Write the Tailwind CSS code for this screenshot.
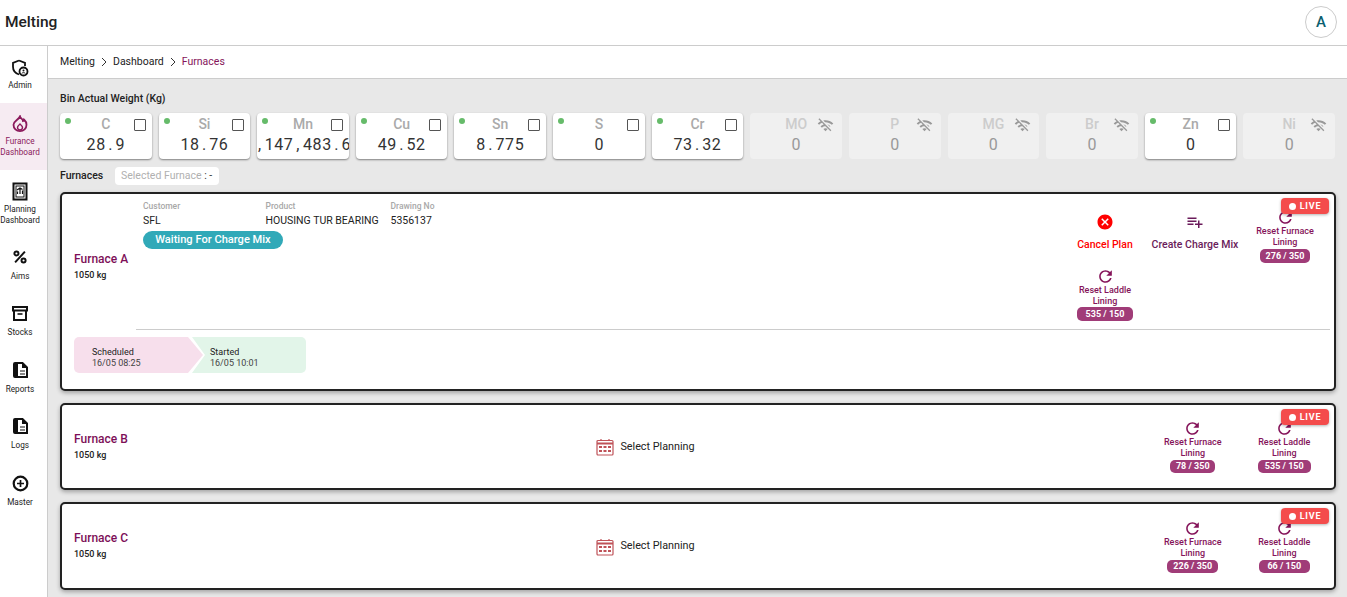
<!DOCTYPE html>
<html lang="en">
<head>
    <meta charset="UTF-8">
    <meta name="viewport" content="width=device-width, initial-scale=1.0">
    <title>Melting | Furnaces</title>
    <script src="https://cdn.jsdelivr.net/npm/@tailwindcss/browser@4"></script>
</head>
<body class="h-screen overflow-hidden bg-white font-[Roboto,sans-serif] text-[#222]">
    <!-- Top bar -->
    <header class="h-[46px] flex items-center justify-between pl-[5px] pr-[10px] border-b border-[#ccc]">
        <h1 class="text-[15.5px] font-medium">Melting</h1>
        <div class="w-8 h-8 -mt-[1px] rounded-full border border-[#ccc] flex items-center justify-center text-[15px] font-medium text-[#0b5f70]">A</div>
    </header>

    <div class="flex h-[551px]">
        <!-- Sidebar -->
        <nav class="w-[48px] shrink-0 border-r border-[#ccc] text-[8.2px] leading-[11px] text-center">
            <a class="h-[57px] pr-[7px] flex flex-col items-center justify-center gap-[3px]">
                <svg class="w-[18px] h-[18px]" viewBox="0 0 18 18" fill="none" stroke="#111" stroke-width="1.8"><path d="M8 1.500l6 2.300v3.200M8 1.500L2 3.800v4c0 3.600 2.500 6.600 6 7.700"/><circle cx="12.500" cy="12.500" r="4" fill="#fff"/><circle cx="12.500" cy="11.500" r="1" fill="#111" stroke="none"/><path d="M10.700 14.400c1-1 2.600-1 3.600 0" stroke-width="1"/></svg>
                <span>Admin</span>
            </a>
            <a class="h-[67px] pr-[7px] flex flex-col items-center justify-center gap-[3px] bg-[#f6ebf2] text-[#8b1a5c]">
                <svg class="w-[16px] h-[18px]" viewBox="0 0 16 18" fill="none" stroke="#8b1a5c" stroke-width="1.8"><path d="M8 1.500c.4 2 3 2.500 3 4.500 1-.3 1.200-1 1.200-1.300 1.500 1.300 2.300 3 2.300 5 0 3.800-2.900 6.500-6.500 6.500s-6.500-2.700-6.500-6.500c0-3.500 4.800-4.500 6.500-8.200z"/><path d="M8 9c1.400 1.200 2.500 2.200 2.500 3.600 0 1.300-1.100 2.400-2.500 2.400s-2.500-1.100-2.500-2.400C5.500 11.200 6.600 10.200 8 9z" stroke-width="1.400"/></svg>
                <span>Furance<br>Dashboard</span>
            </a>
            <a class="h-[67px] pr-[7px] flex flex-col items-center justify-center gap-[3px]">
                <svg class="w-[16px] h-[19px]" viewBox="0 0 16 19" fill="none" stroke="#111"><rect x="1.500" y="1.500" width="13" height="16" stroke-width="2"/><rect x="4" y="4" width="8" height="11" stroke-width="1"/><path d="M5.500 12V9.500M8 12V6.500M10.500 12V8.500M5 8l3-2 2.500 1.500" stroke-width="1.200"/></svg>
                <span>Planning<br>Dashboard</span>
            </a>
            <a class="h-[56px] pr-[7px] flex flex-col items-center justify-center gap-[6px]">
                <svg class="w-[16px] h-[16px]" viewBox="0 0 18 18" fill="none" stroke="#111" stroke-width="2.200"><path d="M14.500 3L3.500 15"/><circle cx="5" cy="5" r="2.300"/><circle cx="13" cy="13" r="2.300"/></svg>
                <span>Aims</span>
            </a>
            <a class="h-[57px] pr-[7px] flex flex-col items-center justify-center gap-[6px]">
                <svg class="w-[16px] h-[16px]" viewBox="0 0 16 16" fill="none" stroke="#111" stroke-width="2"><path d="M1 2h14v3.500H1zM2 5.500V15h12V5.500"/><path d="M5.500 9h5" stroke-width="1.600"/></svg>
                <span>Stocks</span>
            </a>
            <a class="h-[56px] pr-[7px] flex flex-col items-center justify-center gap-[6px]">
                <svg class="w-[15px] h-[16px]" viewBox="0 0 15 16"><path d="M2 1h7.500L14 5.500V15H2a1 1 0 0 1-1-1V2a1 1 0 0 1 1-1z" fill="none" stroke="#111" stroke-width="2"/><path d="M1 1h4v14H1zM9 1v5h5z" fill="#111"/><path d="M7 9h5M7 12h5" stroke="#111" stroke-width="1"/></svg>
                <span>Reports</span>
            </a>
            <a class="h-[57px] pr-[7px] flex flex-col items-center justify-center gap-[6px]">
                <svg class="w-[15px] h-[16px]" viewBox="0 0 15 16"><path d="M2 1h7.500L14 5.500V15H2a1 1 0 0 1-1-1V2a1 1 0 0 1 1-1z" fill="none" stroke="#111" stroke-width="2"/><path d="M1 1h4v14H1zM9 1v5h5z" fill="#111"/><path d="M7 9h5M7 12h5" stroke="#111" stroke-width="1"/></svg>
                <span>Logs</span>
            </a>
            <a class="h-[57px] pr-[7px] flex flex-col items-center justify-center gap-[5px]">
                <svg class="w-[17px] h-[17px]" viewBox="0 0 17 17" fill="none" stroke="#111" stroke-width="2.200"><circle cx="8.500" cy="8.500" r="6.800"/><path d="M8.500 5v7M5 8.500h7" stroke-width="1.700"/></svg>
                <span>Master</span>
            </a>
        </nav>

        <div class="flex-1 min-w-0 flex flex-col bg-[#e8e8e8]">
            <!-- Breadcrumb -->
            <div class="h-[33px] shrink-0 bg-white border-b border-[#ccc] pl-[12px] flex items-center gap-[5px] text-[10.5px] text-[#222]">
                <span>Melting</span>
                <svg class="w-[8px] h-[10px]" viewBox="0 0 8 10" fill="none" stroke="#333"><path d="M2 1l4 4-4 4"/></svg>
                <span>Dashboard</span>
                <svg class="w-[8px] h-[10px]" viewBox="0 0 8 10" fill="none" stroke="#333"><path d="M2 1l4 4-4 4"/></svg>
                <span class="text-[#85145a]">Furnaces</span>
            </div>

            <main class="pl-[12px] pr-[11px] pt-[13px]">
                <h2 class="text-[10.5px] font-medium leading-[13px]">Bin Actual Weight (Kg)</h2>

                <!-- Bins -->
                <div class="grid grid-cols-13 gap-[7px] mt-[8px] mr-[1px]">
                    <div class="relative h-[46px] bg-white rounded-[4px] shadow-[0_1px_2px_rgba(0,0,0,0.45)] overflow-hidden">
                        <span class="absolute left-[5px] top-[5px] w-[6px] h-[6px] rounded-full bg-[#66bb6a]"></span>
                        <span class="absolute right-[6px] top-[6px] w-[12px] h-[12px] border border-[#555] rounded-[1px]"></span>
                        <div class="pt-[3px] text-center text-[14px] leading-[16px] font-medium text-[#aaa]">C</div>
                        <div class="mt-[4px] flex justify-center whitespace-nowrap text-[16px] leading-[18px] tracking-[0.6px] text-[#333]"><span>28<span class="inline-block w-[9.6px] text-center">.</span>9</span></div>
                    </div>
                    <div class="relative h-[46px] bg-white rounded-[4px] shadow-[0_1px_2px_rgba(0,0,0,0.45)] overflow-hidden">
                        <span class="absolute left-[5px] top-[5px] w-[6px] h-[6px] rounded-full bg-[#66bb6a]"></span>
                        <span class="absolute right-[6px] top-[6px] w-[12px] h-[12px] border border-[#555] rounded-[1px]"></span>
                        <div class="pt-[3px] text-center text-[14px] leading-[16px] font-medium text-[#aaa]">Si</div>
                        <div class="mt-[4px] flex justify-center whitespace-nowrap text-[16px] leading-[18px] tracking-[0.6px] text-[#333]"><span>18<span class="inline-block w-[9.6px] text-center">.</span>76</span></div>
                    </div>
                    <div class="relative h-[46px] bg-white rounded-[4px] shadow-[0_1px_2px_rgba(0,0,0,0.45)] overflow-hidden">
                        <span class="absolute left-[5px] top-[5px] w-[6px] h-[6px] rounded-full bg-[#66bb6a]"></span>
                        <span class="absolute right-[6px] top-[6px] w-[12px] h-[12px] border border-[#555] rounded-[1px]"></span>
                        <div class="pt-[3px] text-center text-[14px] leading-[16px] font-medium text-[#aaa]">Mn</div>
                        <div class="mt-[4px] flex justify-center whitespace-nowrap text-[16px] leading-[18px] tracking-[0.6px] text-[#333]"><span class="shrink-0">2<span class="inline-block w-[9.6px] text-center">,</span>147<span class="inline-block w-[9.6px] text-center">,</span>483<span class="inline-block w-[9.6px] text-center">.</span>64</span></div>
                    </div>
                    <div class="relative h-[46px] bg-white rounded-[4px] shadow-[0_1px_2px_rgba(0,0,0,0.45)] overflow-hidden">
                        <span class="absolute left-[5px] top-[5px] w-[6px] h-[6px] rounded-full bg-[#66bb6a]"></span>
                        <span class="absolute right-[6px] top-[6px] w-[12px] h-[12px] border border-[#555] rounded-[1px]"></span>
                        <div class="pt-[3px] text-center text-[14px] leading-[16px] font-medium text-[#aaa]">Cu</div>
                        <div class="mt-[4px] flex justify-center whitespace-nowrap text-[16px] leading-[18px] tracking-[0.6px] text-[#333]"><span>49<span class="inline-block w-[9.6px] text-center">.</span>52</span></div>
                    </div>
                    <div class="relative h-[46px] bg-white rounded-[4px] shadow-[0_1px_2px_rgba(0,0,0,0.45)] overflow-hidden">
                        <span class="absolute left-[5px] top-[5px] w-[6px] h-[6px] rounded-full bg-[#66bb6a]"></span>
                        <span class="absolute right-[6px] top-[6px] w-[12px] h-[12px] border border-[#555] rounded-[1px]"></span>
                        <div class="pt-[3px] text-center text-[14px] leading-[16px] font-medium text-[#aaa]">Sn</div>
                        <div class="mt-[4px] flex justify-center whitespace-nowrap text-[16px] leading-[18px] tracking-[0.6px] text-[#333]"><span>8<span class="inline-block w-[9.6px] text-center">.</span>775</span></div>
                    </div>
                    <div class="relative h-[46px] bg-white rounded-[4px] shadow-[0_1px_2px_rgba(0,0,0,0.45)] overflow-hidden">
                        <span class="absolute left-[5px] top-[5px] w-[6px] h-[6px] rounded-full bg-[#66bb6a]"></span>
                        <span class="absolute right-[6px] top-[6px] w-[12px] h-[12px] border border-[#555] rounded-[1px]"></span>
                        <div class="pt-[3px] text-center text-[14px] leading-[16px] font-medium text-[#aaa]">S</div>
                        <div class="mt-[4px] text-center text-[16px] leading-[18px] text-[#333]">0</div>
                    </div>
                    <div class="relative h-[46px] bg-white rounded-[4px] shadow-[0_1px_2px_rgba(0,0,0,0.45)] overflow-hidden">
                        <span class="absolute left-[5px] top-[5px] w-[6px] h-[6px] rounded-full bg-[#66bb6a]"></span>
                        <span class="absolute right-[6px] top-[6px] w-[12px] h-[12px] border border-[#555] rounded-[1px]"></span>
                        <div class="pt-[3px] text-center text-[14px] leading-[16px] font-medium text-[#aaa]">Cr</div>
                        <div class="mt-[4px] flex justify-center whitespace-nowrap text-[16px] leading-[18px] tracking-[0.6px] text-[#333]"><span>73<span class="inline-block w-[9.6px] text-center">.</span>32</span></div>
                    </div>
                    <div class="relative h-[46px] bg-[#f0f0f0] rounded-[4px]">
                        <svg class="absolute right-[8px] top-[4px] w-[17px] h-[17px]" viewBox="0 0 24 24" fill="#999"><path d="M22.99 9C19.15 5.16 13.8 3.76 8.84 4.78l2.52 2.52c3.47-.17 6.99 1.05 9.63 3.7l2-2zm-4 4c-1.29-1.29-2.84-2.2-4.49-2.73l3.53 3.53.96-.8zM2 3.05L5.07 6.1C3.6 6.82 2.22 7.78 1 9l1.99 2c1.24-1.24 2.67-2.16 4.2-2.77l2.24 2.24C7.81 10.89 6.27 11.73 5 13v.01L6.99 15c1.36-1.36 3.14-2.04 4.92-2.06L18.98 20l1.27-1.26L3.29 1.79 2 3.05zM9 17l3 3 3-3c-1.65-1.66-4.34-1.66-6 0z"/></svg>
                        <div class="pt-[3px] text-center text-[14px] leading-[16px] font-medium text-[#ccc]">MO</div>
                        <div class="mt-[4px] text-center text-[16px] leading-[18px] text-[#999]">0</div>
                    </div>
                    <div class="relative h-[46px] bg-[#f0f0f0] rounded-[4px]">
                        <svg class="absolute right-[8px] top-[4px] w-[17px] h-[17px]" viewBox="0 0 24 24" fill="#999"><path d="M22.99 9C19.15 5.16 13.8 3.76 8.84 4.78l2.52 2.52c3.47-.17 6.99 1.05 9.63 3.7l2-2zm-4 4c-1.29-1.29-2.84-2.2-4.49-2.73l3.53 3.53.96-.8zM2 3.05L5.07 6.1C3.6 6.82 2.22 7.78 1 9l1.99 2c1.24-1.24 2.67-2.16 4.2-2.77l2.24 2.24C7.81 10.89 6.27 11.73 5 13v.01L6.99 15c1.36-1.36 3.14-2.04 4.92-2.06L18.98 20l1.27-1.26L3.29 1.79 2 3.05zM9 17l3 3 3-3c-1.65-1.66-4.34-1.66-6 0z"/></svg>
                        <div class="pt-[3px] text-center text-[14px] leading-[16px] font-medium text-[#ccc]">P</div>
                        <div class="mt-[4px] text-center text-[16px] leading-[18px] text-[#999]">0</div>
                    </div>
                    <div class="relative h-[46px] bg-[#f0f0f0] rounded-[4px]">
                        <svg class="absolute right-[8px] top-[4px] w-[17px] h-[17px]" viewBox="0 0 24 24" fill="#999"><path d="M22.99 9C19.15 5.16 13.8 3.76 8.84 4.78l2.52 2.52c3.47-.17 6.99 1.05 9.63 3.7l2-2zm-4 4c-1.29-1.29-2.84-2.2-4.49-2.73l3.53 3.53.96-.8zM2 3.05L5.07 6.1C3.6 6.82 2.22 7.78 1 9l1.99 2c1.24-1.24 2.67-2.16 4.2-2.77l2.24 2.24C7.81 10.89 6.27 11.73 5 13v.01L6.99 15c1.36-1.36 3.14-2.04 4.92-2.06L18.98 20l1.27-1.26L3.29 1.79 2 3.05zM9 17l3 3 3-3c-1.65-1.66-4.34-1.66-6 0z"/></svg>
                        <div class="pt-[3px] text-center text-[14px] leading-[16px] font-medium text-[#ccc]">MG</div>
                        <div class="mt-[4px] text-center text-[16px] leading-[18px] text-[#999]">0</div>
                    </div>
                    <div class="relative h-[46px] bg-[#f0f0f0] rounded-[4px]">
                        <svg class="absolute right-[8px] top-[4px] w-[17px] h-[17px]" viewBox="0 0 24 24" fill="#999"><path d="M22.99 9C19.15 5.16 13.8 3.76 8.84 4.78l2.52 2.52c3.47-.17 6.99 1.05 9.63 3.7l2-2zm-4 4c-1.29-1.29-2.84-2.2-4.49-2.73l3.53 3.53.96-.8zM2 3.05L5.07 6.1C3.6 6.82 2.22 7.78 1 9l1.99 2c1.24-1.24 2.67-2.16 4.2-2.77l2.24 2.24C7.81 10.89 6.27 11.73 5 13v.01L6.99 15c1.36-1.36 3.14-2.04 4.92-2.06L18.98 20l1.27-1.26L3.29 1.79 2 3.05zM9 17l3 3 3-3c-1.65-1.66-4.34-1.66-6 0z"/></svg>
                        <div class="pt-[3px] text-center text-[14px] leading-[16px] font-medium text-[#ccc]">Br</div>
                        <div class="mt-[4px] text-center text-[16px] leading-[18px] text-[#999]">0</div>
                    </div>
                    <div class="relative h-[46px] bg-white rounded-[4px] shadow-[0_1px_2px_rgba(0,0,0,0.45)] overflow-hidden">
                        <span class="absolute left-[5px] top-[5px] w-[6px] h-[6px] rounded-full bg-[#66bb6a]"></span>
                        <span class="absolute right-[6px] top-[6px] w-[12px] h-[12px] border border-[#555] rounded-[1px]"></span>
                        <div class="pt-[3px] text-center text-[14px] leading-[16px] font-medium text-[#aaa]">Zn</div>
                        <div class="mt-[4px] text-center text-[16px] leading-[18px] text-[#333]">0</div>
                    </div>
                    <div class="relative h-[46px] bg-[#f0f0f0] rounded-[4px]">
                        <svg class="absolute right-[8px] top-[4px] w-[17px] h-[17px]" viewBox="0 0 24 24" fill="#999"><path d="M22.99 9C19.15 5.16 13.8 3.76 8.84 4.78l2.52 2.52c3.47-.17 6.99 1.05 9.63 3.7l2-2zm-4 4c-1.29-1.29-2.84-2.2-4.49-2.73l3.53 3.53.96-.8zM2 3.05L5.07 6.1C3.6 6.82 2.22 7.78 1 9l1.99 2c1.24-1.24 2.67-2.16 4.2-2.77l2.24 2.24C7.81 10.89 6.27 11.73 5 13v.01L6.99 15c1.36-1.36 3.14-2.04 4.92-2.06L18.98 20l1.27-1.26L3.29 1.79 2 3.05zM9 17l3 3 3-3c-1.65-1.66-4.34-1.66-6 0z"/></svg>
                        <div class="pt-[3px] text-center text-[14px] leading-[16px] font-medium text-[#ccc]">Ni</div>
                        <div class="mt-[4px] text-center text-[16px] leading-[18px] text-[#999]">0</div>
                    </div>
                </div>

                <div class="flex items-center h-[18px] mt-[8px] text-[10.5px]">
                    <span class="font-medium w-[55px]">Furnaces</span>
                    <span class="h-[18px] pl-[6px] pr-[7px] flex items-center bg-white rounded-[4px] text-[#b0b0b0]">Selected Furnace&nbsp;<span class="text-[#333]">:&nbsp;-</span></span>
                </div>

                <!-- Furnace A -->
                <section class="relative mt-[7px] h-[199px] bg-white border-2 border-[#222] rounded-[5px] shadow-[0_2px_4px_rgba(0,0,0,0.3)]">
                    <span class="absolute right-[5px] top-[4px] z-10 h-[16px] w-[48px] pt-[1px] flex items-center justify-center gap-[4px] bg-[#f44c4c] rounded-[4px] text-white text-[9px] font-bold tracking-[0.8px] shadow-[0_1px_3px_rgba(0,0,0,0.3)]"><i class="w-[7px] h-[7px] rounded-full bg-white"></i>LIVE</span>
                    <div class="flex h-[135px]">
                        <div class="w-[81px] shrink-0 pl-[12px] pt-[10px] flex flex-col justify-center">
                            <div class="text-[12px] font-medium leading-[14px] text-[#7d0f58]">Furnace A</div>
                            <div class="mt-[3px] text-[9px] font-medium leading-[12px]">1050 kg</div>
                        </div>
                        <div class="flex-1 pt-[7px]">
                            <div class="flex">
                                <div class="w-[122.5px]"><div class="text-[8.5px] font-medium leading-[11px] text-[#a8a8a8]">Customer</div><div class="mt-[2px] text-[10.5px] leading-[13px]">SFL</div></div>
                                <div class="w-[125px]"><div class="text-[8.5px] font-medium leading-[11px] text-[#a8a8a8]">Product</div><div class="mt-[2px] text-[10.5px] leading-[13px]">HOUSING TUR BEARING</div></div>
                                <div><div class="text-[8.5px] font-medium leading-[11px] text-[#a8a8a8]">Drawing No</div><div class="mt-[2px] text-[10.5px] leading-[13px]">5356137</div></div>
                            </div>
                            <div class="mt-[4px] w-[140px] h-[18px] rounded-full bg-[#31a9b8] text-white text-[11.1px] font-medium flex items-center justify-center">Waiting For Charge Mix</div>
                        </div>
                        <div class="w-[270px] shrink-0 mr-[4px] grid grid-cols-3 grid-rows-[71px_56px] pt-[3px] text-center text-[#85145a]">
                            <button class="flex flex-col items-center justify-center gap-[6px] text-[10.5px] font-medium text-[#f00]">
                                <svg class="w-[18px] h-[18px]" viewBox="0 0 24 24" fill="#f00"><path d="M12 2C6.47 2 2 6.47 2 12s4.47 10 10 10 10-4.47 10-10S17.53 2 12 2zm5 13.59L15.59 17 12 13.41 8.41 17 7 15.59 10.59 12 7 8.41 8.41 7 12 10.59 15.59 7 17 8.41 13.41 12 17 15.59z"/></svg>
                                Cancel Plan
                            </button>
                            <button class="flex flex-col items-center justify-center gap-[6px] text-[10.5px] font-medium text-[#6a1b5a]">
                                <svg class="w-[18px] h-[18px]" viewBox="0 0 24 24" fill="#6a1b5a"><path d="M14 10H2v2h12v-2zm0-4H2v2h12V6zm4 8v-4h-2v4h-4v2h4v4h2v-4h4v-2h-4zM2 16h8v-2H2v2z"/></svg>
                                Create Charge Mix
                            </button>
                            <button class="flex flex-col items-center pt-[12px]">
                                <svg class="w-[19px] h-[19px] -my-[1px]" viewBox="0 0 24 24" fill="#85145a"><path d="M17.65 6.35C16.2 4.9 14.21 4 12 4c-4.42 0-7.99 3.58-7.99 8s3.57 8 7.99 8c3.73 0 6.84-2.55 7.73-6h-2.08c-.82 2.33-3.04 4-5.65 4-3.31 0-6-2.69-6-6s2.69-6 6-6c1.66 0 3.14.69 4.22 1.78L13 11h7V4l-2.35 2.35z"/></svg>
                                <span class="text-[9px] font-medium leading-[11px]">Reset Furnace<br>Lining</span>
                                <span class="mt-[1px] h-[14px] w-[50px] rounded-[5px] bg-[#a03c78] text-white text-[9px] font-bold leading-[14px]">276 / 350</span>
                            </button>
                            <button class="flex flex-col items-center">
                                <svg class="w-[19px] h-[19px] -my-[1px]" viewBox="0 0 24 24" fill="#85145a"><path d="M17.65 6.35C16.2 4.9 14.21 4 12 4c-4.42 0-7.99 3.58-7.99 8s3.57 8 7.99 8c3.73 0 6.84-2.55 7.73-6h-2.08c-.82 2.33-3.04 4-5.65 4-3.31 0-6-2.69-6-6s2.69-6 6-6c1.66 0 3.14.69 4.22 1.78L13 11h7V4l-2.35 2.35z"/></svg>
                                <span class="text-[9px] font-medium leading-[10.5px]">Reset Laddle<br>Lining</span>
                                <span class="mt-[1px] h-[14px] w-[56px] rounded-[5px] bg-[#a03c78] text-white text-[9px] font-bold leading-[14px]">535 / 150</span>
                            </button>
                        </div>
                    </div>
                    <div class="ml-[74px] mr-[4px] h-px bg-[#ccc]"></div>
                    <div class="flex mt-[7px] ml-[12px] text-[9px] leading-[11px] text-[#444]">
                        <div class="w-[129px] h-[36px] pl-[18px] pt-[6px] flex flex-col justify-center rounded-l-[5px] bg-[#f7dfec] [clip-path:polygon(0_0,114px_0,129px_50%,114px_100%,0_100%)]">
                            <span class="text-[#222]">Scheduled</span><span>16/05 08:25</span>
                        </div>
                        <div class="w-[114px] -ml-[11px] h-[36px] pl-[18px] pt-[6px] flex flex-col justify-center rounded-r-[5px] bg-[#e2f5e9] [clip-path:polygon(0_0,100%_0,100%_100%,0_100%,13px_50%)]">
                            <span class="text-[#222]">Started</span><span>16/05 10:01</span>
                        </div>
                    </div>
                </section>

                <!-- Furnace B -->
                <section class="relative mt-[12px] h-[87px] bg-white border-2 border-[#222] rounded-[5px] shadow-[0_2px_4px_rgba(0,0,0,0.3)] flex items-center">
                    <span class="absolute right-[5px] top-[4px] z-10 h-[16px] w-[48px] pt-[1px] flex items-center justify-center gap-[4px] bg-[#f44c4c] rounded-[4px] text-white text-[9px] font-bold tracking-[0.8px] shadow-[0_1px_3px_rgba(0,0,0,0.3)]"><i class="w-[7px] h-[7px] rounded-full bg-white"></i>LIVE</span>
                    <div class="w-[82px] shrink-0 pl-[12px] -mt-[1px]">
                        <div class="text-[12px] font-medium leading-[14px] text-[#7d0f58]">Furnace B</div>
                        <div class="mt-[3px] text-[9px] font-medium leading-[12px]">1050 kg</div>
                    </div>
                    <div class="flex-1 pt-[1px] flex items-center justify-center gap-[6px] text-[10.8px]">
                        <svg class="w-[18px] h-[18px]" viewBox="0 0 18 18" fill="none" stroke="#bf5258"><rect x="1" y="2.500" width="16" height="14.500" rx="1" stroke-width="1.200"/><path d="M1 5.500h16" stroke-width="2"/><path d="M5 1v2M13 1v2" stroke-width="1.200"/><path d="M3 9h3M7.500 9h3M12 9h3M3 13h3M7.500 13h3M12 13h3" stroke-width="2"/></svg>
                        Select Planning
                    </div>
                    <div class="w-[183px] shrink-0 mr-[4px] grid grid-cols-2 text-center text-[#85145a]">
                        <button class="flex flex-col items-center">
                            <svg class="w-[19px] h-[19px] -my-[1px]" viewBox="0 0 24 24" fill="#85145a"><path d="M17.65 6.35C16.2 4.9 14.21 4 12 4c-4.42 0-7.99 3.58-7.99 8s3.57 8 7.99 8c3.73 0 6.84-2.55 7.73-6h-2.08c-.82 2.33-3.04 4-5.65 4-3.31 0-6-2.69-6-6s2.69-6 6-6c1.66 0 3.14.69 4.22 1.78L13 11h7V4l-2.35 2.35z"/></svg>
                            <span class="text-[9px] font-medium leading-[11px]">Reset Furnace<br>Lining</span>
                            <span class="mt-[1px] h-[13px] w-[45px] rounded-[5px] bg-[#a03c78] text-white text-[9px] font-bold leading-[13px]">78 / 350</span>
                        </button>
                        <button class="flex flex-col items-center">
                            <svg class="w-[19px] h-[19px] -my-[1px]" viewBox="0 0 24 24" fill="#85145a"><path d="M17.65 6.35C16.2 4.9 14.21 4 12 4c-4.42 0-7.99 3.58-7.99 8s3.57 8 7.99 8c3.73 0 6.84-2.55 7.73-6h-2.08c-.82 2.33-3.04 4-5.65 4-3.31 0-6-2.69-6-6s2.69-6 6-6c1.66 0 3.14.69 4.22 1.78L13 11h7V4l-2.35 2.35z"/></svg>
                            <span class="text-[9px] font-medium leading-[11px]">Reset Laddle<br>Lining</span>
                            <span class="mt-[1px] h-[13px] w-[53px] rounded-[5px] bg-[#a03c78] text-white text-[9px] font-bold leading-[13px]">535 / 150</span>
                        </button>
                    </div>
                </section>

                <!-- Furnace C -->
                <section class="relative mt-[12px] h-[88px] bg-white border-2 border-[#222] rounded-[5px] shadow-[0_2px_4px_rgba(0,0,0,0.3)] flex items-center">
                    <span class="absolute right-[5px] top-[4px] z-10 h-[16px] w-[48px] pt-[1px] flex items-center justify-center gap-[4px] bg-[#f44c4c] rounded-[4px] text-white text-[9px] font-bold tracking-[0.8px] shadow-[0_1px_3px_rgba(0,0,0,0.3)]"><i class="w-[7px] h-[7px] rounded-full bg-white"></i>LIVE</span>
                    <div class="w-[82px] shrink-0 pl-[12px] -mt-[1px]">
                        <div class="text-[12px] font-medium leading-[14px] text-[#7d0f58]">Furnace C</div>
                        <div class="mt-[3px] text-[9px] font-medium leading-[12px]">1050 kg</div>
                    </div>
                    <div class="flex-1 pt-[1px] flex items-center justify-center gap-[6px] text-[10.8px]">
                        <svg class="w-[18px] h-[18px]" viewBox="0 0 18 18" fill="none" stroke="#bf5258"><rect x="1" y="2.500" width="16" height="14.500" rx="1" stroke-width="1.200"/><path d="M1 5.500h16" stroke-width="2"/><path d="M5 1v2M13 1v2" stroke-width="1.200"/><path d="M3 9h3M7.500 9h3M12 9h3M3 13h3M7.500 13h3M12 13h3" stroke-width="2"/></svg>
                        Select Planning
                    </div>
                    <div class="w-[183px] shrink-0 mr-[4px] grid grid-cols-2 text-center text-[#85145a]">
                        <button class="flex flex-col items-center">
                            <svg class="w-[19px] h-[19px] -my-[1px]" viewBox="0 0 24 24" fill="#85145a"><path d="M17.65 6.35C16.2 4.9 14.21 4 12 4c-4.42 0-7.99 3.58-7.99 8s3.57 8 7.99 8c3.73 0 6.84-2.55 7.73-6h-2.08c-.82 2.33-3.04 4-5.65 4-3.31 0-6-2.69-6-6s2.69-6 6-6c1.66 0 3.14.69 4.22 1.78L13 11h7V4l-2.35 2.35z"/></svg>
                            <span class="text-[9px] font-medium leading-[11px]">Reset Furnace<br>Lining</span>
                            <span class="mt-[1px] h-[13px] w-[51px] rounded-[5px] bg-[#a03c78] text-white text-[9px] font-bold leading-[13px]">226 / 350</span>
                        </button>
                        <button class="flex flex-col items-center">
                            <svg class="w-[19px] h-[19px] -my-[1px]" viewBox="0 0 24 24" fill="#85145a"><path d="M17.65 6.35C16.2 4.9 14.21 4 12 4c-4.42 0-7.99 3.58-7.99 8s3.57 8 7.99 8c3.73 0 6.84-2.55 7.73-6h-2.08c-.82 2.33-3.04 4-5.65 4-3.31 0-6-2.69-6-6s2.69-6 6-6c1.66 0 3.14.69 4.22 1.78L13 11h7V4l-2.35 2.35z"/></svg>
                            <span class="text-[9px] font-medium leading-[11px]">Reset Laddle<br>Lining</span>
                            <span class="mt-[1px] h-[13px] w-[51px] rounded-[5px] bg-[#a03c78] text-white text-[9px] font-bold leading-[13px]">66 / 150</span>
                        </button>
                    </div>
                </section>
            </main>
        </div>
    </div>
</body>
</html>
